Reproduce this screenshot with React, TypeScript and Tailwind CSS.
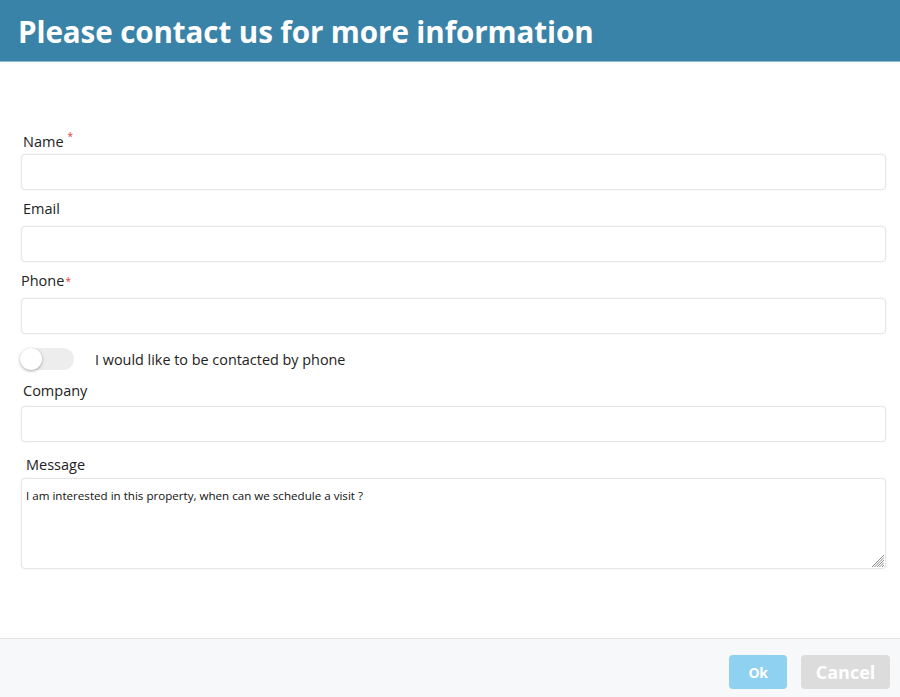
import React from "react";

const inputCls =
  "block w-full h-[36px] rounded-[4px] border border-[#e6e6e6] bg-white shadow-[0_0_2px_rgba(0,0,0,0.08)] outline-none";

export default function App() {
  return (
    <div
      className="w-[900px] h-[697px] bg-white flex flex-col text-[#222]"
      style={{ fontFamily: '"Open Sans", "Noto Sans", sans-serif' }}
    >
      <div className="h-[62px] bg-[#3a83a8] border-b border-[#8fb7cc] flex items-center pl-[18px] shrink-0">
        <h1 className="text-white text-[29.6px] font-bold tracking-[-0.1px] leading-none pt-[3px]">
          Please contact us for more information
        </h1>
      </div>

      <div className="flex-1 pl-[21px] pr-[14px] pt-[70px]">
        <div className="pl-[2px] text-[14.5px] leading-[20px] h-[22px] flex">
          Name<span className="text-[#e53935] text-[10px] leading-[10px] ml-[4px] -mt-[1px]">*</span>
        </div>
        <input className={inputCls} />

        <div className="pl-[2px] text-[14.5px] leading-[20px] mt-[8px] h-[28px] pt-[1px]">Email</div>
        <input className={inputCls} />

        <div className="text-[14.5px] leading-[20px] mt-[8px] h-[28px] pt-[1px] flex">
          Phone<span className="text-[#e53935] text-[10px] leading-[10px] ml-[1px] mt-[5px]">*</span>
        </div>
        <input className={inputCls} />

        <div className="flex items-center mt-[14px] h-[22px]">
          <div className="relative w-[54px] h-[22px] rounded-full bg-[#ededed] -ml-[1px]">
            <div className="absolute left-0 top-0 w-[22px] h-[22px] rounded-full bg-white shadow-[0_1px_3px_rgba(0,0,0,0.35)]" />
          </div>
          <span className="ml-[21px] text-[14.4px] pt-[1px]">I would like to be contacted by phone</span>
        </div>

        <div className="pl-[2px] text-[14.5px] leading-[20px] mt-[11px] h-[25px]">Company</div>
        <input className={inputCls} />

        <div className="pl-[5px] text-[14.5px] leading-[20px] mt-[13px] h-[23px]">Message</div>
        <div className="relative">
          <textarea
            className="block w-full h-[91px] rounded-[4px] border border-[#e6e6e6] bg-white shadow-[0_0_2px_rgba(0,0,0,0.08)] outline-none text-[11.6px] leading-[16px] px-[4px] pt-[9px] resize-none text-[#111]"
            defaultValue="I am interested in this property, when can we schedule a visit ?"
            style={{ fontFamily: '"Open Sans", "Noto Sans", sans-serif' }}
          />
          <svg className="absolute right-[2px] bottom-[2px]" width="13" height="13" viewBox="0 0 13 13">
            <g stroke="#8a8a8a" strokeWidth="1">
              <line x1="13" y1="1" x2="1" y2="13" />
              <line x1="13" y1="3.5" x2="3.5" y2="13" />
              <line x1="13" y1="6" x2="6" y2="13" />
              <line x1="13" y1="8.5" x2="8.5" y2="13" />
              <line x1="13" y1="11" x2="11" y2="13" />
            </g>
          </svg>
        </div>
      </div>

      <div className="h-[59px] shrink-0 bg-[#f7f8fa] border-t border-[#e4e4e4] flex items-start justify-end pr-[10px] pt-[16px] gap-[14px]">
        <button className="w-[58px] h-[34px] rounded-[4px] bg-[#8fd1f1] text-white font-bold text-[14px] tracking-[-0.5px]">
          Ok
        </button>
        <button className="w-[89px] h-[34px] rounded-[4px] bg-[#dcdcdc] text-white font-bold text-[18px]">
          Cancel
        </button>
      </div>
    </div>
  );
}
